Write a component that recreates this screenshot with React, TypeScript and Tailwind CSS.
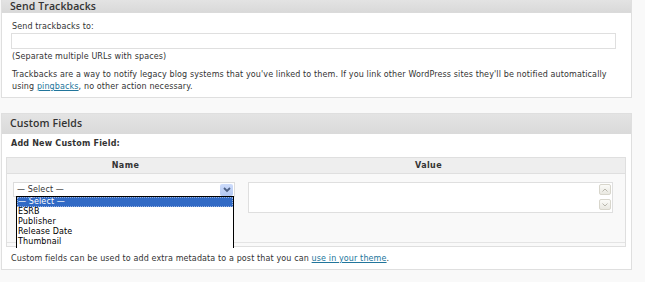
const OPTIONS = ["ESRB", "Publisher", "Release Date", "Thumbnail"];

function ScrollArrow({ down }: { down?: boolean }) {
  return (
    <div className="w-[12px] h-[11px] border border-[#d8d6cc] rounded-[2px] bg-gradient-to-b from-[#fbfbf8] to-[#e9e8e1] flex items-center justify-center">
      <svg width="6" height="4" viewBox="0 0 6 4">
        <path d={down ? "M0.5 0.5 L3 3 L5.5 0.5" : "M0.5 3.5 L3 1 L5.5 3.5"} fill="none" stroke="#b9b7ad" strokeWidth="1" />
      </svg>
    </div>
  );
}

export default function App() {
  return (
    <div className="w-[645px] h-[282px] overflow-hidden bg-[#f9f9f9] text-[#333] font-['DejaVu_Sans',Verdana,sans-serif] text-[8px] tracking-[0.12px]">
      {/* Send Trackbacks */}
      <div className="w-[631px] ml-[1px] border border-t-0 border-[#dfdfdf] bg-white">
        <h3 className="h-[13px] pl-[8px] bg-gradient-to-b from-[#e3e3e3] to-[#d9d9d9] font-['Open_Sans',sans-serif] font-semibold text-[10.5px] leading-[13px] tracking-[0.1px] text-[#333] border-b border-[#dadada]">
          Send Trackbacks
        </h3>
        <div className="pl-[10px] pr-[15px] pt-[9px] pb-[4px]">
          <p className="leading-[10px]">Send trackbacks to:</p>
          <div className="mt-[1px] h-[16px] w-[605px] -ml-[1px] border border-[#dfdfdf] bg-white" />
          <p className="mt-[3px] leading-[10px]">(Separate multiple URLs with spaces)</p>
          <p className="mt-[7px] leading-[12px]">
            Trackbacks are a way to notify legacy blog systems that you've linked to them. If you link other WordPress sites they'll be notified automatically using{" "}
            <a className="text-[#21759b] underline">pingbacks</a>, no other action necessary.
          </p>
        </div>
      </div>

      {/* Custom Fields */}
      <div className="mt-[15px] w-[631px] ml-[1px] border border-[#dfdfdf] bg-white">
        <h3 className="h-[20px] pl-[8px] flex items-center bg-gradient-to-b from-[#e4e4e4] to-[#dadada] font-['Open_Sans',sans-serif] font-semibold text-[10.5px] tracking-[0.1px] text-[#333] border-b border-[#dadada]">
          Custom Fields
        </h3>
        <div className="pt-[5px]">
          <p className="pl-[9px] leading-[10px] font-bold tracking-[0.2px]">Add New Custom Field:</p>
          <div className="relative mt-[8px] ml-[4px] w-[620px] border border-[#dfdfdf] bg-[#f9f9f9]">
            <div className="flex h-[16px] items-center bg-[#eeeeee] border-b border-[#dfdfdf] font-semibold tracking-[0.4px] text-[#333]">
              <div className="w-[237px] text-center">Name</div>
              <div className="flex-1 text-center pr-[12px]">Value</div>
            </div>
            <div className="flex h-[69px] pt-[8px] border-b border-[#e4e4e4]">
              <div className="w-[237px] pl-[6px]">
                <div className="w-[222px] h-[15px] border border-[#dcdcdc] bg-white flex items-center justify-between pl-[3px] pr-[1px]">
                  <span className="leading-[10px]">— Select —</span>
                  <div className="w-[13px] h-[12px] rounded-[2px] bg-gradient-to-b from-[#cddcfb] to-[#b3c8f2] flex items-center justify-center">
                    <svg width="8" height="6" viewBox="0 0 8 6">
                      <path d="M1 1 L4 4 L7 1" fill="none" stroke="#4d6185" strokeWidth="1.8" />
                    </svg>
                  </div>
                </div>
              </div>
              <div className="ml-[4px] w-[365px] h-[31px] border border-[#dfdfdf] bg-white flex justify-end pr-[1px] pt-[1px]">
                <div className="flex flex-col gap-[4px]">
                  <ScrollArrow />
                  <ScrollArrow down />
                </div>
              </div>
            </div>
            <div className="h-[3px]" />
            {/* open option list */}
            <div className="absolute left-[9px] top-[38px] w-[218px] h-[52px] overflow-hidden border border-b-0 border-black bg-white text-black">
              <div className="h-[10px] leading-[10px] pl-[1px] bg-[#316ac5] text-white outline-1 outline-dotted outline-offset-[-1px] outline-[#9bb4e0]">— Select —</div>
              {OPTIONS.map((o) => (
                <div key={o} className="h-[10px] leading-[10px] pl-[1px]">
                  {o}
                </div>
              ))}
            </div>
          </div>
          <p className="pl-[9px] pt-[6px] pb-[5px] leading-[11px]">
            Custom fields can be used to add extra metadata to a post that you can{" "}
            <a className="text-[#21759b] underline">use in your theme</a>.
          </p>
        </div>
      </div>
    </div>
  );
}
